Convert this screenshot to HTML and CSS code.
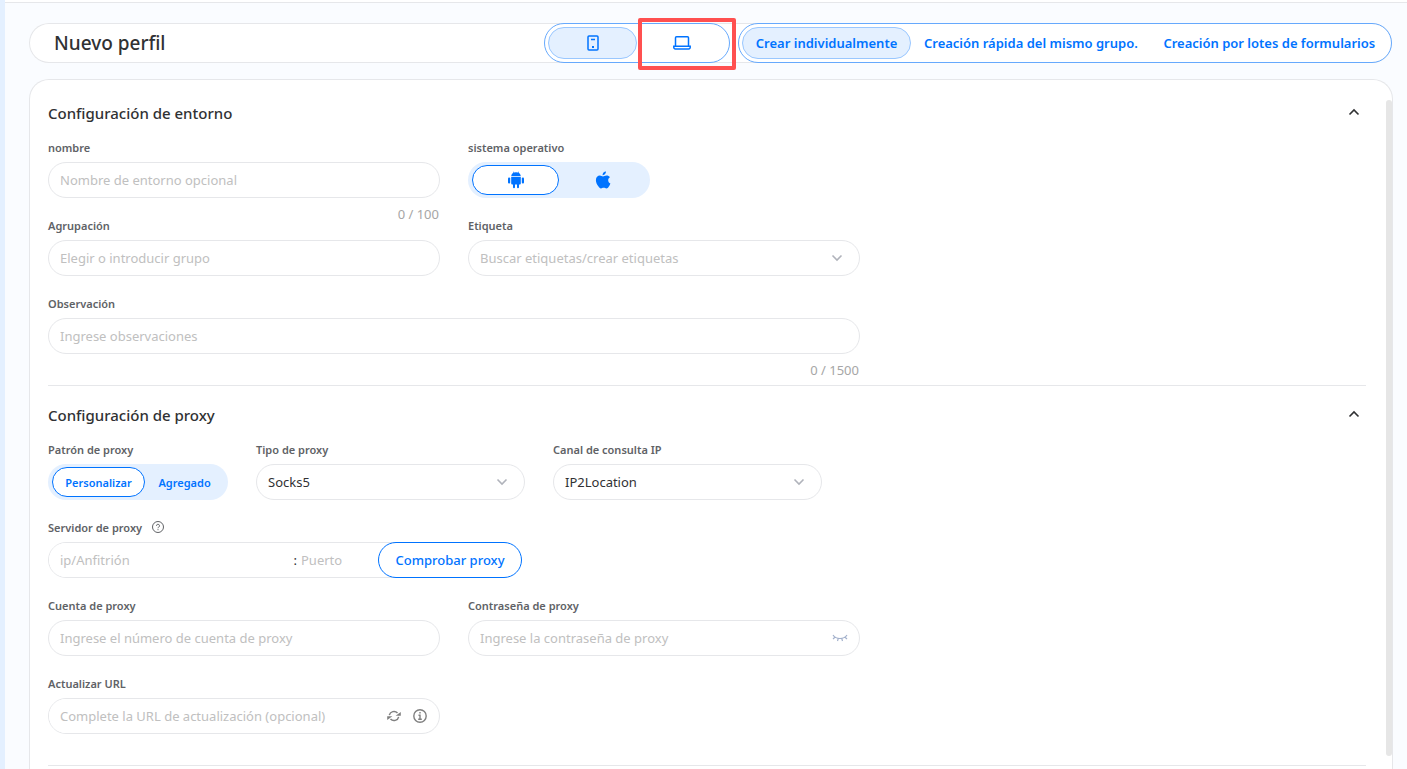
FILE: index.html
```
<!DOCTYPE html>
<html lang="es">
<head>
    <meta charset="UTF-8">
    <meta name="viewport" content="width=device-width, initial-scale=1.0">
    <title>Nuevo perfil</title>
    <link rel="stylesheet" href="styles.css">
</head>
<body>
    <div class="page">
        <header class="topbar">
            <h1>Nuevo perfil</h1>
            <div class="device-group">
                <button type="button" class="device active" aria-label="Teléfono">
                    <svg width="16" height="20" viewBox="0 0 16 20" fill="none" stroke="currentColor" stroke-width="1.5">
                        <rect x="3" y="3" width="10" height="14" rx="1"/>
                        <path d="M6 6.500h4"/>
                        <path d="M7 14h2" stroke-width="2"/>
                    </svg>
                </button>
                <button type="button" class="device" aria-label="Ordenador">
                    <svg width="20" height="20" viewBox="0 0 20 20" fill="none" stroke="currentColor" stroke-width="1.5">
                        <path d="M3.5 13V4.8a1 1 0 0 1 1-1h11a1 1 0 0 1 1 1V13"/>
                        <path d="M1.8 13.2h16.4v1.3a1.5 1.5 0 0 1-1.5 1.5H3.3a1.5 1.5 0 0 1-1.5-1.5z"/>
                    </svg>
                    <span class="highlight"></span>
                </button>
            </div>
            <div class="mode-group">
                <button type="button" class="mode active">Crear individualmente</button>
                <button type="button" class="mode">Creación rápida del mismo grupo.</button>
                <button type="button" class="mode">Creación por lotes de formularios</button>
            </div>
        </header>

        <main class="panel">
            <!-- Entorno -->
            <section class="section">
                <div class="section-head">
                    <h2>Configuración de entorno</h2>
                    <button type="button" class="collapse" aria-label="Contraer entorno">
                        <svg width="12" height="12" viewBox="0 0 12 12" fill="none" stroke="currentColor" stroke-width="1.6"><path d="M1.5 7.5 6 3l4.5 4.5"/></svg>
                    </button>
                </div>
                <div class="row">
                    <div class="field">
                        <label for="nombre">nombre</label>
                        <input type="text" id="nombre" placeholder="Nombre de entorno opcional">
                        <span class="counter">0 / 100</span>
                    </div>
                    <div class="field">
                        <span class="label">sistema operativo</span>
                        <div class="segment segment-os">
                            <button type="button" class="active" aria-label="Android">
                                <svg width="16" height="18" viewBox="0 0 16 18" fill="currentColor">
                                    <path d="M3.2 5.2C3.4 3.6 4.3 2.4 5.5 1.8L4.9.9l.4-.3.7 1a5.6 5.6 0 0 1 4 0l.7-1 .4.3-.6.9c1.2.6 2.1 1.8 2.3 3.4z"/>
                                    <path d="M3.2 6h9.6v6.5a1 1 0 0 1-1 1H11v2.7a1 1 0 0 1-2 0v-2.7H7v2.7a1 1 0 0 1-2 0v-2.7h-.8a1 1 0 0 1-1-1z"/>
                                    <rect x="0" y="6.5" width="2.2" height="6" rx="1"/>
                                    <rect x="13.8" y="6.5" width="2.2" height="6" rx="1"/>
                                </svg>
                            </button>
                            <button type="button" aria-label="Apple">
                                <svg width="16" height="18" viewBox="0 0 16 18" fill="currentColor">
                                    <path d="M10.9.4c.1 1-.3 2-.9 2.7-.6.7-1.5 1.2-2.4 1.1-.1-1 .4-2 .9-2.6C9.1.9 10.1.4 10.9.4z"/>
                                    <path d="M15 6.2c-1.2.8-1.8 1.7-1.8 3 0 1.5.8 2.6 2.2 3.2-.4 1.2-1 2.3-1.7 3.3-.6.9-1.3 1.7-2.3 1.7s-1.4-.6-2.7-.6-1.7.6-2.7.6c-1.1 0-1.8-.8-2.5-1.8C1.9 13.5.9 11.3.9 9.2c0-3 1.9-4.6 3.9-4.6 1.3 0 2.3.8 3.2.8.8 0 2-.8 3.5-.8 1.5 0 2.7.6 3.5 1.6z"/>
                                </svg>
                            </button>
                        </div>
                    </div>
                </div>
                <div class="row">
                    <div class="field">
                        <label for="grupo">Agrupación</label>
                        <input type="text" id="grupo" placeholder="Elegir o introducir grupo">
                    </div>
                    <div class="field">
                        <label for="etiqueta">Etiqueta</label>
                        <div class="select-wrap">
                            <select id="etiqueta" class="empty">
                                <option value="">Buscar etiquetas/crear etiquetas</option>
                            </select>
                            <svg class="arrow" width="12" height="12" viewBox="0 0 12 12" fill="none" stroke="currentColor" stroke-width="1.6"><path d="M1.5 3.5 6 8l4.5-4.5"/></svg>
                        </div>
                    </div>
                </div>
                <div class="row">
                    <div class="field field-wide">
                        <label for="observacion">Observación</label>
                        <input type="text" id="observacion" placeholder="Ingrese observaciones">
                        <span class="counter">0 / 1500</span>
                    </div>
                </div>
            </section>

            <!-- Proxy -->
            <section class="section">
                <div class="section-head">
                    <h2>Configuración de proxy</h2>
                    <button type="button" class="collapse" aria-label="Contraer proxy">
                        <svg width="12" height="12" viewBox="0 0 12 12" fill="none" stroke="currentColor" stroke-width="1.6"><path d="M1.5 7.5 6 3l4.5 4.5"/></svg>
                    </button>
                </div>
                <div class="row">
                    <div class="field field-pattern">
                        <span class="label">Patrón de proxy</span>
                        <div class="segment segment-proxy">
                            <button type="button" class="active">Personalizar</button>
                            <button type="button">Agregado</button>
                        </div>
                    </div>
                    <div class="field field-small">
                        <label for="tipo">Tipo de proxy</label>
                        <div class="select-wrap">
                            <select id="tipo">
                                <option>Socks5</option>
                            </select>
                            <svg class="arrow" width="12" height="12" viewBox="0 0 12 12" fill="none" stroke="currentColor" stroke-width="1.6"><path d="M1.5 3.5 6 8l4.5-4.5"/></svg>
                        </div>
                    </div>
                    <div class="field field-small">
                        <label for="canal">Canal de consulta IP</label>
                        <div class="select-wrap">
                            <select id="canal">
                                <option>IP2Location</option>
                            </select>
                            <svg class="arrow" width="12" height="12" viewBox="0 0 12 12" fill="none" stroke="currentColor" stroke-width="1.6"><path d="M1.5 3.5 6 8l4.5-4.5"/></svg>
                        </div>
                    </div>
                </div>
                <div class="row">
                    <div class="field field-server">
                        <label for="host">Servidor de proxy
                            <svg width="12" height="12" viewBox="0 0 12 12" fill="none" stroke="currentColor">
                                <circle cx="6" cy="6" r="5.5"/>
                                <path d="M4.5 4.8a1.5 1.5 0 1 1 2.2 1.3c-.5.3-.7.5-.7 1.1M6 8.2v1"/>
                            </svg>
                        </label>
                        <div class="server">
                            <div class="server-box">
                                <input type="text" id="host" placeholder="ip/Anfitrión">
                                <span>:</span>
                                <input type="text" id="port" class="port" aria-label="Puerto" placeholder="Puerto">
                            </div>
                            <button type="button" class="check">Comprobar proxy</button>
                        </div>
                    </div>
                </div>
                <div class="row">
                    <div class="field">
                        <label for="cuenta">Cuenta de proxy</label>
                        <input type="text" id="cuenta" placeholder="Ingrese el número de cuenta de proxy">
                    </div>
                    <div class="field">
                        <label for="clave">Contraseña de proxy</label>
                        <div class="select-wrap">
                            <input type="password" id="clave" placeholder="Ingrese la contraseña de proxy">
                            <svg class="eye" width="16" height="8" viewBox="0 0 16 8" fill="none" stroke="currentColor" stroke-width="1.2">
                                <path d="M1 1c1.5 2.2 4 3.5 7 3.5S13.5 3.2 15 1M3.2 3 1 5M12.8 3 15 5M6.3 4.3 5.5 7M9.7 4.3l.8 2.7"/>
                            </svg>
                        </div>
                    </div>
                </div>
                <div class="row">
                    <div class="field">
                        <label for="url">Actualizar URL</label>
                        <div class="url-box">
                            <input type="text" id="url" placeholder="Complete la URL de actualización (opcional)">
                            <button type="button" aria-label="Actualizar">
                                <svg width="14" height="14" viewBox="0 0 14 14" fill="none" stroke="currentColor" stroke-width="1.5">
                                    <path d="M2.3 6.2A4.8 4.8 0 0 1 10.5 4M11.7 7.8A4.8 4.8 0 0 1 3.5 10"/>
                                    <path d="M8.6 6.8h5.2V3zM5.4 7.2H.2V11z" fill="currentColor" stroke="none"/>
                                </svg>
                            </button>
                            <button type="button" aria-label="Información">
                                <svg width="14" height="14" viewBox="0 0 14 14" fill="none" stroke="currentColor" stroke-width="1.4">
                                    <circle cx="7" cy="7" r="6.2"/>
                                    <path d="M7 3v1.6M5.5 6.2H7v4M5.2 10.2h3.6"/>
                                </svg>
                            </button>
                        </div>
                    </div>
                </div>
            </section>
            <div class="scrollbar"></div>
        </main>
    </div>
</body>
</html>
```
FILE: styles.css
```
* {
    box-sizing: border-box;
}
body {
    margin: 0;
    font-family: "Noto Sans", "Open Sans", sans-serif;
    font-size: 13px;
    color: #303133;
    background-color: #fafcff;
    border-left: 5px solid #e4f0ff;
    overflow: hidden;
}
button, input, select {
    font-family: inherit;
    font-size: 13px;
    margin: 0;
}
button {
    display: flex;
    align-items: center;
    justify-content: center;
    padding: 0;
    border: none;
    background: none;
    color: #0073ff;
    cursor: pointer;
    white-space: nowrap;
}
.page {
    display: flex;
    flex-direction: column;
    height: 100vh;
    padding: 0 14px 0 24px;
}
.page::before {
    content: "";
    height: 2px;
    margin: 0 -14px 20px -24px;
    background-color: white;
    border-bottom: 1px solid #e6e7ea;
    flex-shrink: 0;
}

/* top bar */
.topbar {
    display: flex;
    align-items: center;
    gap: 8px;
    height: 40px;
    flex-shrink: 0;
    margin: 0 1px 16px 0;
    border-radius: 20px;
    background-color: white;
    box-shadow: inset 0 0 0 1px #e6e7ea;
}
h1 {
    flex: 1;
    margin: 0;
    padding-left: 25px;
    font-size: 19px;
    font-weight: 500;
}
.device-group, .mode-group {
    display: flex;
    height: 40px;
    padding: 3px;
    border: 1px solid #66a9fd;
    border-radius: 20px;
    background-color: white;
}
.mode-group {
    min-width: 654px;
}
.device {
    position: relative;
    width: 89px;
    border-radius: 16px;
}
.mode {
    flex: auto;
    padding: 0 12px;
    border-radius: 16px;
    font-weight: 600;
}
.device.active, .mode.active {
    background-color: #e4f0ff;
    border: 1px solid #99c7ff;
}
.highlight {
    position: absolute;
    inset: -9px -10px -11px 1px;
    border: 4px solid #ff5050;
    border-radius: 2px;
}

/* panel */
.panel {
    position: relative;
    flex: 1;
    min-height: 0;
    padding: 21px 26px 0 18px;
    border: 1px solid #e6e7ea;
    border-bottom: none;
    border-radius: 20px 20px 0 0;
    background-color: white;
}
.scrollbar {
    position: absolute;
    top: 20px;
    right: 0;
    bottom: 13px;
    width: 6px;
    border-radius: 3px;
    background-color: #e6e6e6;
}
.section {
    padding-bottom: 31px;
    margin-bottom: 17px;
    border-bottom: 1px solid #e6e7ea;
}
.section-head {
    display: flex;
    justify-content: space-between;
    align-items: center;
    height: 24px;
    margin-bottom: 13px;
}
h2 {
    margin: 0;
    font-size: 15px;
    font-weight: 500;
}
.collapse {
    width: 24px;
    height: 24px;
    color: #303133;
}
.row {
    display: flex;
    gap: 28px;
    margin-bottom: 18px;
}
.row:last-child {
    margin-bottom: 0;
}
.field {
    position: relative;
    width: 392px;
}
.field-wide {
    width: 812px;
}
.field-small {
    width: 269px;
}
.field-pattern {
    width: 180px;
}
.field-server {
    width: 474px;
}
label, .label {
    display: flex;
    align-items: center;
    gap: 10px;
    height: 18px;
    margin-bottom: 6px;
    font-size: 11px;
    font-weight: 600;
    color: #606266;
}
input, select {
    display: block;
    width: 100%;
    height: 36px;
    padding: 0 11px;
    border: 1px solid #e6e7ea;
    border-radius: 18px;
    outline: none;
    background-color: white;
    color: #303133;
}
select {
    appearance: none;
}
select.empty, input::placeholder {
    color: #c0c0c0;
}
.select-wrap {
    position: relative;
}
.arrow {
    position: absolute;
    top: 12px;
    right: 17px;
    color: #b0b3bb;
}
.eye {
    position: absolute;
    top: 14px;
    right: 12px;
    color: #a3b1cc;
}
.counter {
    position: absolute;
    top: 66px;
    right: 1px;
    line-height: 20px;
    color: #a6a6a6;
}

.segment {
    display: flex;
    width: fit-content;
    height: 36px;
    padding: 3px 4px;
    border-radius: 18px;
    background-color: #e4f0ff;
}
.segment button {
    border: 1px solid transparent;
    border-radius: 15px;
    font-size: 11px;
    font-weight: 600;
}
.segment .active {
    border-color: #0073ff;
    background-color: white;
}
.segment-os button {
    width: 87px;
}
.segment-proxy {
    width: 100%;
}
.segment-proxy button {
    flex: auto;
}

.server {
    display: flex;
}
.server-box {
    display: flex;
    align-items: center;
    flex: 1;
    height: 36px;
    margin-right: -20px;
    border: 1px solid #e6e7ea;
    border-radius: 18px 0 0 18px;
}
.server-box input {
    flex: 1;
    min-width: 0;
    height: 34px;
    border: none;
}
.server-box .port {
    flex: none;
    width: 100px;
    padding: 0 4px;
}
.check {
    position: relative;
    width: 144px;
    height: 36px;
    border: 1px solid #0073ff;
    border-radius: 18px;
    background-color: white;
    font-weight: 500;
}
.url-box {
    display: flex;
    align-items: center;
    gap: 12px;
    height: 36px;
    padding-right: 12px;
    border: 1px solid #e6e7ea;
    border-radius: 18px;
}
.url-box input {
    flex: 1;
    min-width: 0;
    height: 34px;
    padding-right: 0;
    border: none;
}
.url-box button {
    color: #808080;
}
```
